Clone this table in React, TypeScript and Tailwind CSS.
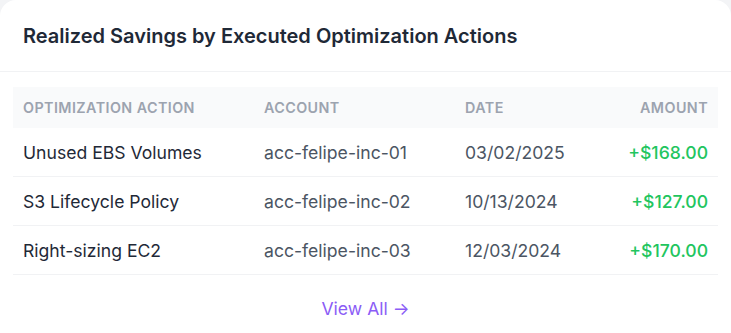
import React from "react";

const rows = [
  { action: "Unused EBS Volumes", account: "acc-felipe-inc-01", date: "03/02/2025", amount: "+$168.00" },
  { action: "S3 Lifecycle Policy", account: "acc-felipe-inc-02", date: "10/13/2024", amount: "+$127.00" },
  { action: "Right-sizing EC2", account: "acc-felipe-inc-03", date: "12/03/2024", amount: "+$170.00" },
];

export default function App() {
  return (
    <div
      className="min-h-[333px] w-[731px] bg-[#f3f4f6]"
      style={{ fontFamily: "Inter, 'Noto Sans', sans-serif" }}
    >
      <div className="w-[731px] rounded-t-2xl bg-white min-h-[333px] pb-6">
        <div className="border-b border-[#f1f2f4] px-[23px] pt-[21px] pb-[20px]">
          <h2 className="text-[20px] leading-[30px] font-semibold text-[#1f2937]">
            Realized Savings by Executed Optimization Actions
          </h2>
        </div>
        <div className="px-[13px] pt-[15px]">
          <div className="grid grid-cols-[241px_201px_1fr_auto] h-[41px] items-center bg-[#f9fafb] text-[14.3px] font-semibold uppercase tracking-[0.03em] text-[#9ca3af]">
            <div className="pl-[10px]">Optimization Action</div>
            <div className="pl-[10px]">Account</div>
            <div className="pl-[10px]">Date</div>
            <div className="pr-[10px] text-right">Amount</div>
          </div>
          {rows.map((r) => (
            <div
              key={r.action}
              className="grid grid-cols-[241px_201px_1fr_auto] h-[49px] items-center border-b border-[#f1f2f4] pt-[2px] text-[17.6px]"
            >
              <div className="pl-[10px] text-[#1f2937]">{r.action}</div>
              <div className="pl-[10px] text-[#4b5563]">{r.account}</div>
              <div className="pl-[10px] text-[#4b5563]">{r.date}</div>
              <div className="pr-[10px] text-right font-medium text-[#22c55e]">{r.amount}</div>
            </div>
          ))}
          <div className="flex justify-center pt-[21px]">
            <span className="text-[17.6px] leading-[26px] text-[#8b5cf6]">View All →</span>
          </div>
        </div>
      </div>
    </div>
  );
}
